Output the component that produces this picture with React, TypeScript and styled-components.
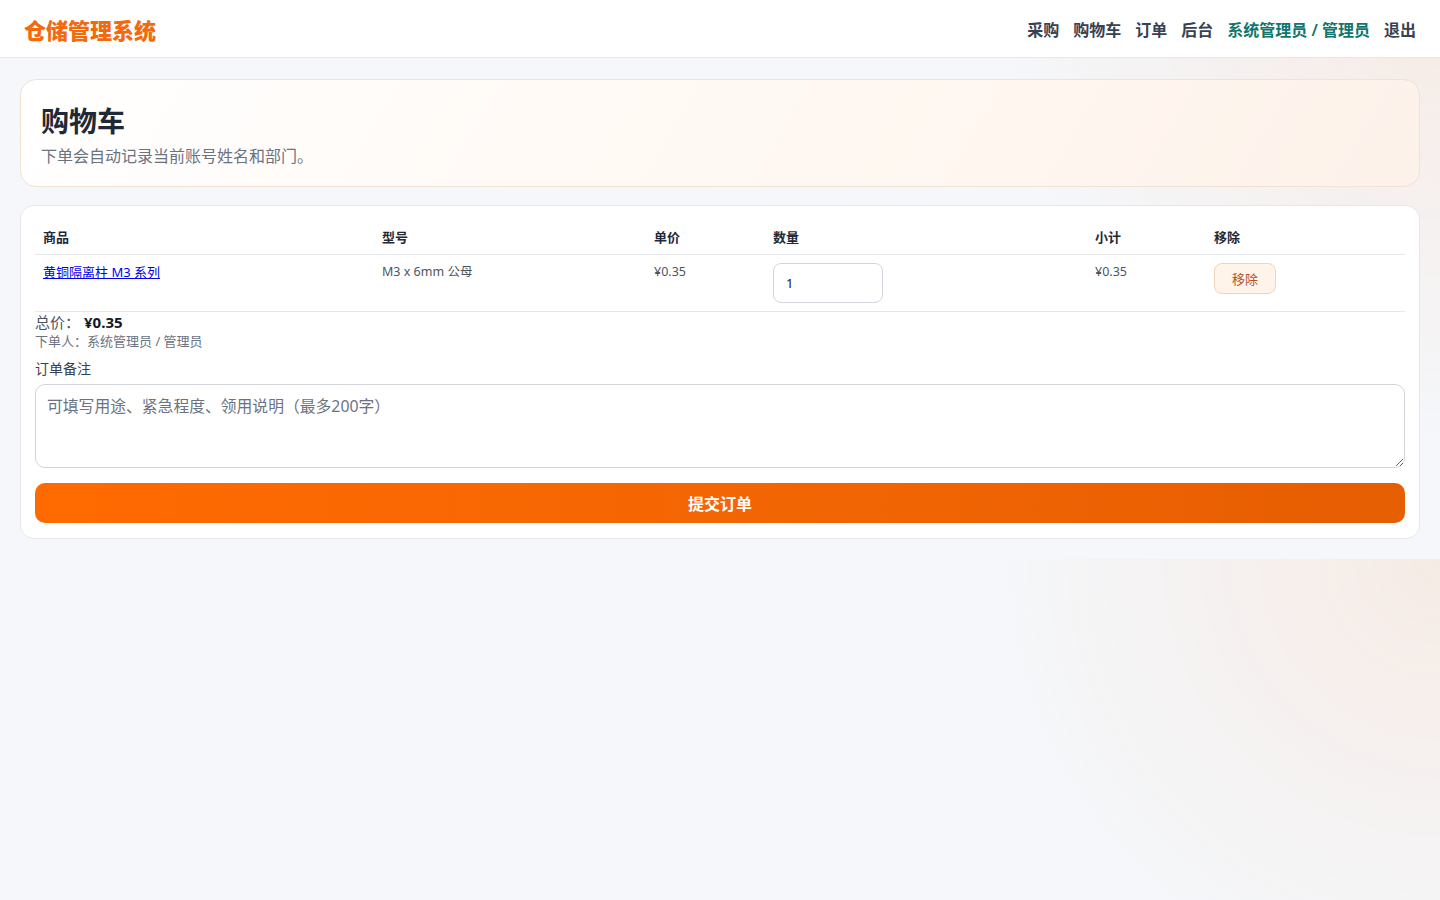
import React from "react";
import styled, { createGlobalStyle } from "styled-components";

const Global = createGlobalStyle`
  * { box-sizing: border-box; }
  body {
    margin: 0;
    font-family: "Noto Sans", "Noto Sans CJK SC", sans-serif;
    color: #1f2937;
    background:
      radial-gradient(circle at 100% 0%, rgba(255, 112, 20, 0.09), rgba(255, 112, 20, 0) 440px),
      #f5f7fa;
  }
`;

const Header = styled.header`
  height: 58px;
  background: #fff;
  border-bottom: 1px solid #e5e7eb;
  display: flex;
  align-items: center;
  justify-content: space-between;
  padding: 0 24px;
`;

const Logo = styled.div`
  font-size: 22px;
  font-weight: 800;
  color: #f26a0c;
`;

const Nav = styled.nav`
  display: flex;
  align-items: center;
  gap: 14px;
`;

const NavItem = styled.a<{ $user?: boolean }>`
  font-size: 16px;
  font-weight: 600;
  color: ${(p) => (p.$user ? "#0f766e" : "#374151")};
  text-decoration: none;
  cursor: pointer;
`;

const Main = styled.main`
  padding: 21px 20px 20px;
  display: flex;
  flex-direction: column;
  gap: 18px;
`;

const Hero = styled.section`
  border: 1px solid #f1e2d6;
  border-radius: 16px;
  background: linear-gradient(120deg, #ffffff 0%, #fff8f2 55%, #fdf2ea 100%);
  padding: 21px 20px 19px;
`;

const Title = styled.h1`
  margin: 0;
  font-size: 28px;
  line-height: 40px;
  font-weight: 700;
  color: #1f2937;
`;

const Sub = styled.p`
  margin: 4px 0 0;
  font-size: 16px;
  line-height: 22px;
  color: #6b7280;
`;

const Card = styled.section`
  background: #fff;
  border: 1px solid #e5e7eb;
  border-radius: 14px;
  padding: 14px 14px 15px;
  display: flex;
  flex-direction: column;
`;

const Table = styled.table`
  width: 100%;
  border-collapse: collapse;
  table-layout: fixed;
`;

const Th = styled.th<{ $w: number }>`
  width: ${(p) => p.$w}px;
  text-align: left;
  font-size: 13px;
  line-height: 18px;
  font-weight: 700;
  color: #1f2937;
  padding: 8px;
  border-bottom: 1px solid #e5e7eb;
`;

const Td = styled.td`
  vertical-align: top;
  font-size: 12.5px;
  line-height: 18px;
  color: #4b5563;
  padding: 8px;
  border-bottom: 1px solid #e5e7eb;
`;

const ProductLink = styled.a`
  color: #0000ee;
  text-decoration: underline;
  font-size: 13px;
`;

const QtyInput = styled.input`
  width: 110px;
  height: 40px;
  border: 1px solid #d1d5db;
  border-radius: 8px;
  padding: 0 12px;
  font-size: 13px;
  font-family: inherit;
  color: #111827;
  outline: none;
`;

const RemoveBtn = styled.button`
  height: 31px;
  padding: 0 17px;
  border: 1px solid #f6d2b6;
  background: #fff4ea;
  color: #b4532a;
  border-radius: 8px;
  font-size: 13px;
  font-family: inherit;
  cursor: pointer;
`;

const Total = styled.div`
  font-size: 15px;
  line-height: 20px;
  color: #4b5563;
  b { color: #111827; font-weight: 700; margin-left: 4px; }
`;

const Buyer = styled.div`
  font-size: 13px;
  line-height: 18px;
  color: #6b7280;
`;

const Label = styled.label`
  margin-top: 10px;
  font-size: 14px;
  line-height: 18px;
  color: #374151;
`;

const Note = styled.textarea`
  margin-top: 6px;
  height: 84px;
  width: 100%;
  border: 1px solid #d1d5db;
  border-radius: 10px;
  padding: 10px 11px;
  font-size: 15.8px;
  line-height: 22px;
  font-family: inherit;
  resize: vertical;
  outline: none;
  display: block;
  &::placeholder { color: #6b7280; }
`;

const Submit = styled.button`
  margin-top: 15px;
  height: 40px;
  width: 100%;
  border: none;
  border-radius: 10px;
  background: linear-gradient(90deg, #ff6a00 0%, #f46604 50%, #e65e02 100%);
  color: #fff;
  font-size: 16px;
  font-weight: 700;
  font-family: inherit;
  cursor: pointer;
`;

const cols = [
  { label: "商品", w: 339 },
  { label: "型号", w: 272 },
  { label: "单价", w: 119 },
  { label: "数量", w: 322 },
  { label: "小计", w: 119 },
  { label: "移除", w: 199 },
];

export default function App() {
  return (
    <>
      <Global />
      <Header>
        <Logo>仓储管理系统</Logo>
        <Nav>
          <NavItem>采购</NavItem>
          <NavItem>购物车</NavItem>
          <NavItem>订单</NavItem>
          <NavItem>后台</NavItem>
          <NavItem $user>系统管理员 / 管理员</NavItem>
          <NavItem>退出</NavItem>
        </Nav>
      </Header>
      <Main>
        <Hero>
          <Title>购物车</Title>
          <Sub>下单会自动记录当前账号姓名和部门。</Sub>
        </Hero>
        <Card>
          <Table>
            <thead>
              <tr>
                {cols.map((c) => (
                  <Th key={c.label} $w={c.w}>
                    {c.label}
                  </Th>
                ))}
              </tr>
            </thead>
            <tbody>
              <tr>
                <Td>
                  <ProductLink href="#">黄铜隔离柱 M3 系列</ProductLink>
                </Td>
                <Td>M3 x 6mm 公母</Td>
                <Td>¥0.35</Td>
                <Td>
                  <QtyInput type="number" defaultValue={1} />
                </Td>
                <Td>¥0.35</Td>
                <Td>
                  <RemoveBtn>移除</RemoveBtn>
                </Td>
              </tr>
            </tbody>
          </Table>
          <Total>
            总价：<b>¥0.35</b>
          </Total>
          <Buyer>下单人：系统管理员 / 管理员</Buyer>
          <Label>订单备注</Label>
          <Note placeholder="可填写用途、紧急程度、领用说明（最多200字）" />
          <Submit>提交订单</Submit>
        </Card>
      </Main>
    </>
  );
}
